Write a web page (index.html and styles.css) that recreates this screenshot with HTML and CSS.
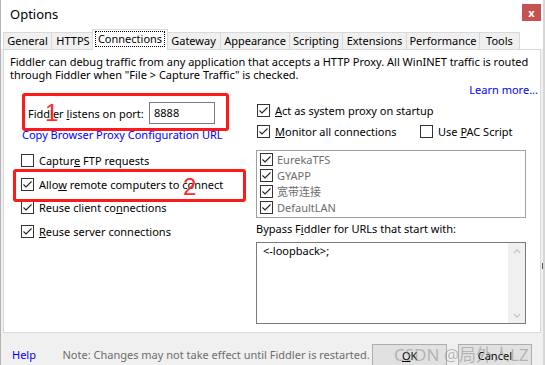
FILE: index.html
```html
<!DOCTYPE html>
<html lang="en">

<head>
   <meta charset="UTF-8">
   <meta name="viewport" content="width=device-width, initial-scale=1.0">
   <title>Options</title>
   <link rel="stylesheet" href="styles.css">
</head>

<body>
   <div class="window">
      <div class="titlebar">
         <span class="title">Options</span>
         <span class="close">x</span>
      </div>
      <div class="tabs">
         <span class="tab t-general">General</span>
         <span class="tab t-https">HTTPS</span>
         <span class="tab active"><span class="focus">Connections</span></span>
         <span class="tab t-gateway">Gateway</span>
         <span class="tab t-appearance">Appearance</span>
         <span class="tab t-scripting">Scripting</span>
         <span class="tab t-extensions">Extensions</span>
         <span class="tab t-performance">Performance</span>
         <span class="tab t-tools">Tools</span>
      </div>
      <div class="panel">
         <p class="intro">Fiddler can debug traffic from any application that accepts a HTTP Proxy. All WinINET traffic is routed<br>through Fiddler when "File &gt; Capture Traffic" is checked.</p>
         <div class="learn"><a>Learn more...</a></div>
         <div class="cols">
            <div class="left">
               <div class="port">
                  <label>Fiddler <u>l</u>istens on port:</label>
                  <span class="input">8888</span>
               </div>
               <a class="copy">Copy Browser Proxy Configuration URL</a>
               <div class="row ftp"><span class="cb"></span><span>Captur<u>e</u> FTP requests</span></div>
               <div class="row allow"><span class="cb on"><svg viewBox="0 0 11 11"><path d="M1.5 5.5 L4 8 L9.5 2.5"/></svg></span><span>Allo<u>w</u> remote computers to connect</span></div>
               <div class="row client"><span class="cb on"><svg viewBox="0 0 11 11"><path d="M1.5 5.5 L4 8 L9.5 2.5"/></svg></span><span>Reuse client co<u>n</u>nections</span></div>
               <div class="row server"><span class="cb on"><svg viewBox="0 0 11 11"><path d="M1.5 5.5 L4 8 L9.5 2.5"/></svg></span><span><u>R</u>euse server connections</span></div>
            </div>
            <div class="right">
               <div class="row act"><span class="cb on"><svg viewBox="0 0 11 11"><path d="M1.5 5.5 L4 8 L9.5 2.5"/></svg></span><span><u>A</u>ct as system proxy on startup</span></div>
               <div class="row monitor">
                  <span class="mon"><span class="cb on"><svg viewBox="0 0 11 11"><path d="M1.5 5.5 L4 8 L9.5 2.5"/></svg></span><span><u>M</u>onitor all connections</span></span>
                  <span class="pac"><span class="cb"></span><span>Use <u>P</u>AC Script</span></span>
               </div>
               <div class="list">
                  <div class="item"><span class="cb on"><svg viewBox="0 0 11 11"><path d="M1.5 5.5 L4 8 L9.5 2.5"/></svg></span><span>EurekaTFS</span></div>
                  <div class="item"><span class="cb on"><svg viewBox="0 0 11 11"><path d="M1.5 5.5 L4 8 L9.5 2.5"/></svg></span><span>GYAPP</span></div>
                  <div class="item"><span class="cb on"><svg viewBox="0 0 11 11"><path d="M1.5 5.5 L4 8 L9.5 2.5"/></svg></span><span>宽带连接</span></div>
                  <div class="item"><span class="cb on"><svg viewBox="0 0 11 11"><path d="M1.5 5.5 L4 8 L9.5 2.5"/></svg></span><span>DefaultLAN</span></div>
               </div>
               <div class="bypass">Bypass F<u>i</u>ddler for URLs that start with:</div>
               <div class="textarea">
                  <span class="value">&lt;-loopback&gt;;</span>
                  <div class="scroll">
                     <svg viewBox="0 0 10 6"><path d="M1 5 L5 1 L9 5"/></svg>
                     <svg viewBox="0 0 10 6"><path d="M1 1 L5 5 L9 1"/></svg>
                  </div>
               </div>
            </div>
         </div>
      </div>
      <div class="footer">
         <a class="help">Help</a>
         <span class="note">Note: Changes may not take effect until Fiddler is restarted.</span>
         <span class="btn ok"><span><u>O</u>K</span></span>
         <span class="btn">Cancel</span>
      </div>

      <!-- annotations drawn on top of the screenshot -->
      <div class="mark mark1"></div>
      <div class="mark mark2"></div>
      <span class="num num1">1</span>
      <span class="num num2">2</span>
      <span class="grip"></span>
      <span class="watermark">CSDN @局外人LZ</span>
   </div>
</body>

</html>
```

FILE: styles.css
```css
* {
   padding: 0;
   margin: 0;
   box-sizing: border-box;
}

body {
   background: #f0f0f0;
   font-family: "Noto Sans", "Noto Sans CJK SC", sans-serif;
   font-size: 11px;
   color: #000;
}

.window {
   width: 545px;
   height: 365px;
   position: relative;
   overflow: hidden;
   background: #f0f0f0;
   border-left: 1px solid #b4b4b4;
   border-right: 2px solid #d6d6d6;
}

.titlebar {
   height: 29px;
   background: #fff;
   display: flex;
   align-items: center;
   justify-content: space-between;
   padding: 0 2px 0 9px;
}

.title {
   font-size: 13px;
   margin-top: -1px;
}

.close {
   width: 19px;
   height: 17px;
   margin-top: -4px;
   background: #c75050;
   color: #fff;
   font-weight: bold;
   font-size: 11px;
   display: flex;
   justify-content: center;
   align-items: center;
}

.tabs {
   height: 20px;
   background: #fff;
   display: flex;
   align-items: flex-end;
   padding-left: 2px;
   position: relative;
   z-index: 1;
   white-space: nowrap;
}

.tab {
   height: 17px;
   line-height: 16px;
   text-align: center;
   background: #f0f0f0;
   border: 1px solid #d9d9d9;
   border-bottom: none;
   margin-right: -1px;
}

.t-general { width: 49px; }
.t-https { width: 44px; }
.t-gateway { width: 55px; }
.t-appearance { width: 70px; }
.t-scripting { width: 54px; }
.t-extensions { width: 65px; }
.t-performance { width: 74px; }
.t-tools { width: 41px; }

.tab.active {
   width: 76px;
   height: 21px;
   background: #fff;
   margin: 0 -2px 0 -2px;
   padding: 1px 2px 0;
   position: relative;
   top: 1px;
}

.focus {
   display: block;
   line-height: 14px;
   border: 1px dotted #000;
}

.panel {
   height: 284px;
   margin: 0 2px 0 2px;
   background: #fff;
   border: 1px solid #d9d9d9;
   padding: 5px 0 0 6px;
}

.intro {
   line-height: 13px;
   white-space: nowrap;
}

.learn {
   text-align: right;
   line-height: 12px;
   margin-top: 3px;
   padding-right: 2px;
}

a {
   color: #0000ff;
}

.cols {
   display: flex;
}

.left {
   width: 246px;
   padding-left: 11px;
   display: flex;
   flex-direction: column;
}

.port {
   display: flex;
   align-items: center;
   margin-top: 6px;
   padding-left: 7px;
}

.port label {
   width: 121px;
   white-space: nowrap;
}

.input {
   width: 66px;
   height: 22px;
   border: 1px solid #7a7a7a;
   padding-left: 4px;
   line-height: 19px;
}

.copy {
   line-height: 12px;
   margin-top: 5px;
   margin-left: 1px;
   white-space: nowrap;
}

.row {
   display: flex;
   align-items: center;
   height: 13px;
   white-space: nowrap;
}

.cb {
   width: 13px;
   height: 13px;
   border: 1px solid #333;
   background: #fff;
   margin-right: 5px;
   flex-shrink: 0;
   display: flex;
   align-items: center;
   justify-content: center;
}

.cb svg {
   width: 11px;
   height: 11px;
   fill: none;
   stroke: #222;
   stroke-width: 1.1;
}

.ftp {
   margin-top: 13px;
}

.allow {
   margin-top: 11px;
}

.client {
   margin-top: 10px;
}

.server {
   margin-top: 11px;
}

.right {
   width: 270px;
   display: flex;
   flex-direction: column;
}

.act {
   margin-top: 8px;
   padding-left: 1px;
}

.monitor {
   margin-top: 8px;
   padding-left: 1px;
}

.mon,
.pac {
   display: flex;
   align-items: center;
}

.mon {
   width: 163px;
}

.list {
   margin-top: 12px;
   height: 68px;
   border: 1px solid #a0a0a0;
   padding-left: 3px;
   color: #6d6d6d;
}

.item {
   height: 16px;
   display: flex;
   align-items: center;
}

.item .cb {
   margin-right: 4px;
}

.bypass {
   margin-top: 5px;
   line-height: 12px;
}

.textarea {
   margin-top: 7px;
   height: 82px;
   border: 1px solid #7a7a7a;
   display: flex;
   justify-content: space-between;
}

.value {
   padding: 0 0 0 6px;
   line-height: 14px;
   margin-top: 1px;
}

.scroll {
   width: 17px;
   background: #f0f0f0;
   display: flex;
   flex-direction: column;
   justify-content: space-between;
   align-items: center;
   padding: 6px 0 5px;
}

.scroll svg {
   width: 8px;
   height: 5px;
   fill: none;
   stroke: #c2c2c2;
   stroke-width: 1.5;
}

.footer {
   display: flex;
   align-items: flex-start;
   padding: 11px 0 0 11px;
   white-space: nowrap;
}

.help {
   line-height: 21px;
   width: 51px;
}

.note {
   line-height: 21px;
   color: #6d6d6d;
   width: 313px;
}

.btn {
   width: 75px;
   height: 23px;
   background: #e1e1e1;
   border: 1px solid #adadad;
   display: flex;
   justify-content: center;
   align-items: center;
   margin-right: 11px;
}

.mark {
   position: absolute;
   border: 3px solid #ff1a1a;
   border-radius: 3px;
}

.mark1 {
   left: 21px;
   top: 93px;
   width: 207px;
   height: 38px;
}

.mark2 {
   left: 12px;
   top: 169px;
   width: 233px;
   height: 33px;
}

.num {
   position: absolute;
   color: #ff2a2a;
   font-family: "Liberation Sans", sans-serif;
   font-size: 24px;
   line-height: 24px;
}

.num1 {
   left: 44px;
   top: 101px;
}

.num2 {
   left: 182px;
   top: 175px;
}

.grip {
   position: absolute;
   right: -1px;
   top: 263px;
   width: 2px;
   height: 6px;
   background: #555;
}

.watermark {
   position: absolute;
   left: 393px;
   top: 341px;
   font-size: 17px;
   color: rgba(140, 140, 140, 0.55);
   white-space: nowrap;
}
```
